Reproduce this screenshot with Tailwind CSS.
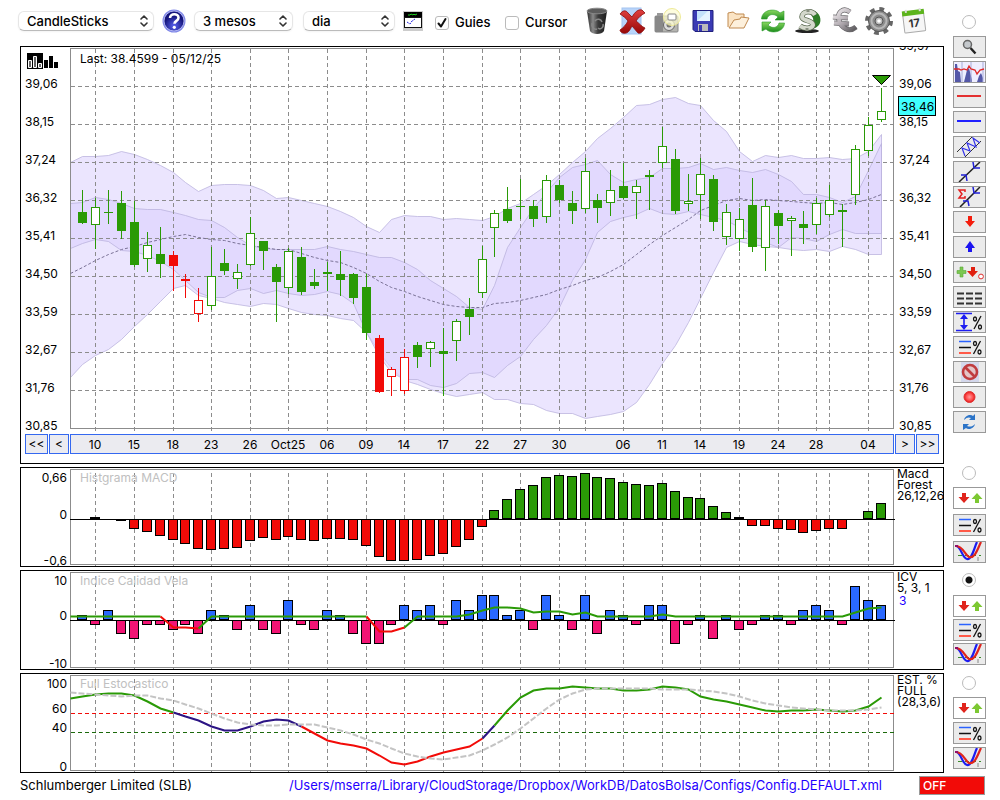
<!DOCTYPE html>
<html lang="ca">
<head>
  <meta charset="UTF-8">
  <title>Schlumberger Limited (SLB)</title>
  <script src="https://cdn.jsdelivr.net/npm/@tailwindcss/browser@4"></script>
</head>
<body class="bg-white text-black font-['Inter',sans-serif] text-[13px]">

  <!-- shared gradients and repeated icons -->
  <svg class="absolute size-0" aria-hidden="true">
    <defs>
      <linearGradient id="metal" x1="0" x2="1"><stop offset="0" stop-color="#2a2a2a"/><stop offset=".3" stop-color="#8a8a8a"/><stop offset=".55" stop-color="#3c3c3c"/><stop offset="1" stop-color="#1c1c1c"/></linearGradient>
      <linearGradient id="silver" x1="0" x2="1" y2="1"><stop offset="0" stop-color="#f4f0f2"/><stop offset=".5" stop-color="#b5aeb4"/><stop offset="1" stop-color="#5a585b"/></linearGradient>
      <linearGradient id="green" x2="0" y2="1"><stop offset="0" stop-color="#8ad860"/><stop offset="1" stop-color="#1c8c1c"/></linearGradient>
      <linearGradient id="redx" x2="0" y2="1"><stop offset="0" stop-color="#e04040"/><stop offset="1" stop-color="#980808"/></linearGradient>
      <radialGradient id="help" cy=".75"><stop offset="0" stop-color="#5a64f0"/><stop offset="1" stop-color="#15157c"/></radialGradient>
      <radialGradient id="rec"><stop offset="0" stop-color="#ff9a9a"/><stop offset=".6" stop-color="#ff5050"/><stop offset="1" stop-color="#e01818"/></radialGradient>
    </defs>
    <symbol id="i-updown" viewBox="0 0 31 20">
      <path d="M8 5h4v4h3.500l-5.500 6-5.500-6H8z" fill="#e0241c"/>
      <path d="M21 15h4v-4h3.500l-5.500-6-5.500 6H21z" fill="#7cc832"/>
    </symbol>
    <symbol id="i-percent" viewBox="0 0 31 20">
      <path d="M5 4.500h12" stroke="#2a62ff" stroke-width="1.500"/>
      <path d="M5 10.500h12" stroke="#111" stroke-width="1.500"/>
      <path d="M5 16h12" stroke="#ff5a48" stroke-width="2"/>
      <path d="M26.500 4l-7 13" stroke="#111" stroke-width="1.300"/>
      <g fill="none" stroke="#111" stroke-width="1.300"><ellipse cx="21" cy="6.500" rx="1.500" ry="2"/><ellipse cx="25.500" cy="15" rx="1.500" ry="2"/></g>
    </symbol>
    <symbol id="i-cross" viewBox="0 0 31 20">
      <path d="M4 13.500h23" stroke="#3a8a2a" stroke-dasharray="4 3"/>
      <path d="M24 15v4" stroke="#888"/>
      <path d="M2 4c5 0 6 12 11 13 5 1 7-11 10-17" fill="none" stroke="#1c1cf0" stroke-width="2.200"/>
      <path d="M2 4c7 0 9 9 13 11 6 2 9-9 12-15" fill="none" stroke="#e0241c" stroke-width="2.200"/>
      <rect x="1" y="3" width="3" height="2" fill="#90106a"/>
    </symbol>
    <symbol id="i-chevrons" viewBox="0 0 8 12">
      <path d="M1 4l3-3 3 3M1 8l3 3 3-3" fill="none" stroke="#333" stroke-width="1.600" stroke-linecap="round" stroke-linejoin="round"/>
    </symbol>
  </svg>

  <main class="flex gap-[9px] pl-5 pr-[14px]">
    <div class="min-w-0 flex-1">

      <header class="-ml-0.5 flex h-[46px] items-center pb-1">
        <div class="relative mr-2">
          <select aria-label="Tipus" class="h-5 w-[136px] appearance-none rounded-md border border-[#e6e6e6] border-b-[#bbb] bg-white pl-2 font-medium leading-4 shadow-xs"><option>CandleSticks</option></select>
          <svg class="pointer-events-none absolute right-1.5 top-1 h-3 w-2"><use href="#i-chevrons"/></svg>
        </div>
        <button aria-label="Ajuda" class="mr-2 h-6 w-6">
          <svg viewBox="0 0 24 24" class="size-6"><circle cx="12" cy="12" r="11.500" fill="#8088e8"/><circle cx="12" cy="12" r="10" fill="url(#help)" stroke="#c4c8f8" stroke-width=".8"/><path d="M8 9c0-5 8.500-5 8.500-.3 0 3.300-4 3-4 6" fill="none" stroke="#fff" stroke-width="2.600"/><circle cx="12.300" cy="18.300" r="1.600" fill="#fff"/></svg>
        </button>
        <div class="relative mr-2.5">
          <select aria-label="Periode" class="h-5 w-[99px] appearance-none rounded-md border border-[#e6e6e6] border-b-[#bbb] bg-white pl-2 font-medium leading-4 shadow-xs"><option>3 mesos</option></select>
          <svg class="pointer-events-none absolute right-1.5 top-1 h-3 w-2"><use href="#i-chevrons"/></svg>
        </div>
        <div class="relative mr-2">
          <select aria-label="Interval" class="h-5 w-[92px] appearance-none rounded-md border border-[#e6e6e6] border-b-[#bbb] bg-white pl-2 font-medium leading-4 shadow-xs"><option>dia</option></select>
          <svg class="pointer-events-none absolute right-1.5 top-1 h-3 w-2"><use href="#i-chevrons"/></svg>
        </div>
        <button aria-label="Panells" class="mr-3">
          <svg viewBox="0 0 20 20" class="size-5"><rect width="20" height="20" fill="#ccc"/><rect x="1" y="1" width="18" height="5"/><path d="M5 4h2l1-1 2 1 1-1 1 1 2-1" stroke="#1fd01f" fill="none"/><rect x="1.500" y="6.500" width="17" height="10" fill="#fff" stroke="#111"/><path d="M4 11l3 2 2-3 3-2" fill="none" stroke="#2020e0" stroke-dasharray="2 1"/></svg>
        </button>
        <div class="flex items-center pt-[3px]">
          <div class="relative size-3.5">
            <input id="guies" type="checkbox" checked class="peer block size-3.5 appearance-none rounded-[3px] border border-[#bbb] bg-white">
            <svg viewBox="0 0 14 14" class="pointer-events-none invisible absolute inset-0 size-3.5 peer-checked:visible"><path d="M3.500 7.500l2.500 3 4.500-7.500" fill="none" stroke="#111" stroke-width="2" stroke-linecap="round" stroke-linejoin="round"/></svg>
          </div>
          <label for="guies" class="ml-1.5 w-[50px] font-medium">Guies</label>
          <input id="cursor" type="checkbox" class="size-3.5 appearance-none rounded-[3px] border border-[#bbb] bg-white">
          <label for="cursor" class="ml-1.5 w-[57px] font-medium">Cursor</label>
        </div>

        <div class="flex flex-1 items-center justify-between pr-[15px] [&>button]:flex [&>button]:w-[30px] [&>button]:justify-center">
          <button aria-label="Esborrar"><svg viewBox="0 0 26 28" class="h-7 w-[26px]"><path d="M3 4l3 20c2 4 12 4 14 0l3-20z" fill="url(#metal)"/><ellipse cx="13" cy="4" rx="10" ry="2.800" fill="#5c5c5c" stroke="#888"/><path d="M11 14c2-3 6-2 7 1M8 16c-1 4 2 7 5 6M19 17c1 4-3 6-5 4" fill="none" stroke="#888" stroke-width="1.500"/></svg></button>
          <button aria-label="Eliminar"><svg viewBox="0 0 28 28" class="size-7"><rect x="4" y="1" width="19" height="26" fill="#b8d4fa" stroke="#a4c4f0"/><path d="M2 7c3-4 6-4 8-1l4 4c3-5 6-8 10-7l3 3c-4 2-7 5-9 8 3 2 6 6 9 7-2 4-5 6-7 5l-6-7c-2 4-4 7-6 7-3 1-6-1-6-3 3-2 6-5 8-9-2-3-5-5-8-7z" fill="url(#redx)" stroke="#8c0c0c" stroke-width=".8"/></svg></button>
          <button aria-label="Captura"><svg viewBox="0 0 28 28" class="size-7"><rect x="2" y="9" width="23" height="16" rx="1" fill="#b4b4b0" stroke="#888"/><rect x="2" y="9" width="8" height="16" fill="#888"/><rect x="4" y="6" width="6" height="3" fill="#999"/><circle cx="16" cy="18" r="5.500" fill="#ddd" stroke="#666"/><circle cx="16" cy="18" r="2.500" fill="#777"/><circle cx="19" cy="10" r="8.500" fill="#fcfbd0" fill-opacity=".7" stroke="#eeea98"/><rect x="15" y="7" width="8" height="6" rx="1" fill="#fff" stroke="#888"/></svg></button>
          <button aria-label="Desar"><svg viewBox="0 0 24 24" class="size-6"><path d="M2 1.500h20v21H4l-2-2z" fill="#3a3ab4" stroke="#20207c"/><rect x="6" y="2" width="13" height="10" fill="#c4e2fa"/><path d="M6 12L17 2h2v10z" fill="#e6f4ff"/><rect x="7" y="15" width="10" height="7" fill="#bbb"/><rect x="8" y="16" width="3" height="6" fill="#3a3ab4"/></svg></button>
          <button aria-label="Obrir"><svg viewBox="0 0 26 26" class="size-[26px]"><path d="M3 19V5l5-1 3 2h8v5" fill="#fbe4c4" stroke="#c08a50"/><path d="M4 20l5-8 6-1 1-2 8 1-5 10z" fill="#fdf0dc" stroke="#c08a50"/></svg></button>
          <button aria-label="Actualitzar"><svg viewBox="0 0 26 26" class="size-[26px]"><path d="M1.500 11C2 1 16 0 20 5l4-2v9h-9l3-3C14 5 8 6 7 11z" fill="url(#green)" stroke="#2a9a2a" stroke-width=".6"/><path d="M24.500 15C24 25 10 26 6 21l-4 2v-9h9l-3 3c4 4 10 3 11-2z" fill="url(#green)" stroke="#2a9a2a" stroke-width=".6"/></svg></button>
          <button aria-label="Dividends"><svg viewBox="0 0 28 28" class="size-7"><ellipse cx="13" cy="24" rx="12" ry="2" fill="#222"/><path d="M14 3c10-1 14 7 12 13-2 5-8 7-14 6 6-2 8-6 7-11z" fill="#2f7c28"/><path d="M21 8c-3-5-13-4-13 2 0 4 11 3 11 8-1 4-9 4-13 1" fill="none" stroke="#5a6a50" stroke-width="5.500"/><path d="M21 8c-3-5-13-4-13 2 0 4 11 3 11 8-1 4-9 4-13 1" fill="none" stroke="#d4d8cc" stroke-width="4"/><path d="M14 2v3M13 21v3" stroke="#889080" stroke-width="3"/></svg></button>
          <button aria-label="Divisa"><svg viewBox="0 0 28 28" class="size-7"><path d="M20 5C13 0 7 5 9 13s10 13 17 7M3 10l15 1M4 16l15 1" fill="none" stroke="#6a686b" stroke-width="5"/><path d="M20 5C13 0 7 5 9 13s10 13 17 7M3 10l15 1M4 16l15 1" fill="none" stroke="url(#silver)" stroke-width="3.600"/></svg></button>
          <button aria-label="Configurar"><svg viewBox="0 0 30 30" class="size-[30px]"><circle cx="15" cy="15" r="12" fill="none" stroke="#666" stroke-width="4" stroke-dasharray="4.700 4.720"/><circle cx="15" cy="15" r="10.500" fill="#8c8c8c" stroke="#555"/><circle cx="15" cy="15" r="7.500" fill="none" stroke="#b8b8b8" stroke-width="2"/><circle cx="15" cy="15" r="4" fill="#bbb" stroke="#555"/><circle cx="15" cy="15" r="1.800" fill="#fff"/></svg></button>
          <button aria-label="Calendari"><svg viewBox="0 0 26 26" class="size-[26px]"><g transform="rotate(-7 13 13)"><rect x="2.500" y="3" width="21" height="21" rx="1" fill="#f6f6f6" stroke="#aaa"/><rect x="2" y="2" width="22" height="5" fill="#5cb41c"/><path d="M6 1v3M20 1v3" stroke="#ddd" stroke-width="2"/><text x="13" y="19" text-anchor="middle" font-size="11" font-weight="700" fill="#333">17</text></g></svg></button>
        </div>
      </header>

      <div class="flex flex-col gap-[3px]">
        <section class="border border-black pb-[9px]">
          <svg id="price" viewBox="21 47 922 387" class="block w-full" font-size="12"></svg>
          <div class="flex gap-px px-1 text-xs leading-none">
            <button class="h-5 w-[23px] border border-[#3468f0] bg-[#ebebf0]">&lt;&lt;</button>
            <button class="h-5 w-5 border border-[#3468f0] bg-[#ebebf0]">&lt;</button>
            <div class="h-5 flex-1 border border-[#3468f0] bg-[#ebebf0]">
              <svg id="dates" viewBox="71 435 822 18" class="block w-full" font-size="12" text-anchor="middle"></svg>
            </div>
            <button class="h-5 w-5 border border-[#3468f0] bg-[#ebebf0]">&gt;</button>
            <button class="h-5 w-[23px] border border-[#3468f0] bg-[#ebebf0]">&gt;&gt;</button>
          </div>
        </section>
        <section class="border border-black"><svg id="macd" viewBox="21 468 922 98" class="block w-full" font-size="12"></svg></section>
        <section class="border border-black"><svg id="icv" viewBox="21 571 922 98" class="block w-full" font-size="12"></svg></section>
        <section class="border border-black"><svg id="stoch" viewBox="21 674 922 98" class="block w-full" font-size="12"></svg></section>
      </div>
    </div>

    <aside class="flex w-[33px] flex-col items-center pt-[15px]">
      <input type="radio" name="panel" aria-label="Panell preu" class="mr-0.5 size-3.5 appearance-none rounded-full border border-[#bbb] bg-white">
      <div class="mt-[7px] flex flex-col gap-[3px]">
        <button aria-label="Zoom" class="h-[22px] w-[33px] border border-[#999] bg-[#ebebeb]"><svg viewBox="0 0 31 20" class="h-5 w-[31px]"><path d="M16.500 11l5 5.500" stroke="#222" stroke-width="2.400"/><circle cx="13.500" cy="7.500" r="4" fill="#c4c8cc" stroke="#666" stroke-width="1.500"/></svg></button>
        <button aria-label="Volum" class="h-[22px] w-[33px] border border-[#999] bg-[#eef]"><svg viewBox="0 0 31 20" class="h-5 w-[31px]"><path d="M1 20V2h2l1 7 2 1 1 10h3l3-12 2-2 3 12v2h5l2-6 2-3 2 5v4z" fill="#5458a8"/><path d="M8 0v20M17 0v20M29 0v20" stroke="#a8acd8"/><path d="M0 7h5l2 1 3-1 3 1 2-4 2 3 4 1 2 4 3-4 4-1" fill="none" stroke="#e02828" stroke-width="1.300"/></svg></button>
        <button aria-label="Línia vermella" class="h-[22px] w-[33px] border border-[#999] bg-[#ebebeb]"><svg viewBox="0 0 31 20" class="h-5 w-[31px]"><path d="M3 9h24" stroke="#e43030" stroke-width="2"/></svg></button>
        <button aria-label="Línia blava" class="h-[22px] w-[33px] border border-[#999] bg-[#ebebeb]"><svg viewBox="0 0 31 20" class="h-5 w-[31px]"><path d="M3 9h24" stroke="#2020ff" stroke-width="2"/></svg></button>
        <button aria-label="Canal" class="h-[22px] w-[33px] border border-[#999] bg-[#ebebeb]"><svg viewBox="0 0 31 20" class="h-5 w-[31px]"><path d="M3 15L18 0M11 20L27 4" stroke="#333"/><path d="M11 19L8 11l8 3-3-8 9 4-3-9 7 5" fill="none" stroke="#3434e8" stroke-width="1.200"/></svg></button>
        <button aria-label="Tendència" class="h-[22px] w-[33px] border border-[#999] bg-[#ebebeb]"><svg viewBox="0 0 31 20" class="h-5 w-[31px]"><path d="M5 20L26 0" stroke="#222" stroke-width="1.500"/><path d="M7 13l5 0 1 6M19 0l1 6h6" fill="none" stroke="#2020d8" stroke-width="1.500"/></svg></button>
        <button aria-label="Suma tendència" class="h-[22px] w-[33px] border border-[#999] bg-[#ebebeb]"><svg viewBox="0 0 31 20" class="h-5 w-[31px]"><path d="M6 20L26 0" stroke="#222" stroke-width="1.500"/><path d="M9 14h5l1 5M19 0l1 6h6" fill="none" stroke="#2020d8" stroke-width="1.500"/><path d="M11 5V3H5l3 4-3 4h6V9" fill="none" stroke="#e42020" stroke-width="1.500"/></svg></button>
        <button aria-label="Venda" class="h-[22px] w-[33px] border border-[#999] bg-[#ebebeb]"><svg viewBox="0 0 31 20" class="h-5 w-[31px]"><path d="M14 4h4v5h3l-5 6-5-6h3z" fill="#f41c0c"/></svg></button>
        <button aria-label="Compra" class="h-[22px] w-[33px] border border-[#999] bg-[#ebebeb]"><svg viewBox="0 0 31 20" class="h-5 w-[31px]"><path d="M14 15h4v-4h3l-5-7-5 7h3z" fill="#1c14f0"/></svg></button>
        <button aria-label="Senyals" class="h-[22px] w-[33px] border border-[#999] bg-[#ebebeb]"><svg viewBox="0 0 31 20" class="h-5 w-[31px]"><path d="M6 5h3v3.500h3v3H9V15H6v-3.500H3v-3h3z" fill="#7cc850" stroke="#58a838" stroke-width=".6"/><path d="M17 5h4v4h3l-5.500 6L13 9h4z" fill="#e02010"/><circle cx="27" cy="14.500" r="2.400" fill="#fff" stroke="#e03030"/></svg></button>
        <button aria-label="Línies" class="h-[22px] w-[33px] border border-[#999] bg-[#ebebeb]"><svg viewBox="0 0 31 20" class="h-5 w-[31px]"><path d="M3 6.500h25M3 11.500h25M3 16.500h25" stroke="#333" stroke-width="1.800" stroke-dasharray="7 2"/></svg></button>
        <button aria-label="Rang" class="h-[22px] w-[33px] border border-[#999] bg-[#ebebeb]"><svg viewBox="0 0 31 20" class="h-5 w-[31px]"><path d="M2 1.500h16M2 18.500h16M10 4v12" stroke="#1c1cf0" stroke-width="1.600"/><path d="M10 2l4 5H6zM10 18l4-5H6z" fill="#1c1cf0"/><path d="M27 4l-7 13" stroke="#111" stroke-width="1.300"/><g fill="none" stroke="#111" stroke-width="1.300"><ellipse cx="21" cy="7" rx="1.500" ry="2"/><ellipse cx="26" cy="15" rx="1.500" ry="2"/></g></svg></button>
        <button aria-label="Percentatge" class="h-[22px] w-[33px] border border-[#999] bg-[#ebebeb]"><svg class="h-5 w-[31px]"><use href="#i-percent"/></svg></button>
        <button aria-label="Prohibit" class="h-[22px] w-[33px] border border-[#999] bg-[#ebebeb]"><svg viewBox="0 0 31 20" class="h-5 w-[31px]"><rect x="7" width="18" height="20" fill="#d4d8ec"/><circle cx="16" cy="10" r="7" fill="#e4c4c8" stroke="#c03c40" stroke-width="2.600"/><path d="M11 5l10 10" stroke="#c03c40" stroke-width="2.600"/></svg></button>
        <button aria-label="Gravar" class="h-[22px] w-[33px] border border-[#999] bg-[#ebebeb]"><svg viewBox="0 0 31 20" class="h-5 w-[31px]"><circle cx="15.500" cy="10" r="5.500" fill="url(#rec)" stroke="#e03434"/></svg></button>
        <button aria-label="Recarregar" class="h-[22px] w-[33px] border border-[#999] bg-[#ebebeb]"><svg viewBox="0 0 31 20" class="h-5 w-[31px]"><path d="M10 8c1-5 7-6 9-4l2-2v6h-6l2-2c-2-1-4-1-7 2zM21 12c-1 5-7 6-9 4l-3 2v-6h6l-2 2c3 1 5 1 8-2z" fill="#2c74c8"/></svg></button>
      </div>

      <input type="radio" name="panel" aria-label="Panell MACD" class="mt-[33px] mr-0.5 size-3.5 appearance-none rounded-full border border-[#bbb] bg-white">
      <div class="mt-[7px] flex flex-col gap-[5px]">
        <button aria-label="Moure MACD" class="h-[22px] w-[33px] border border-[#999] bg-white"><svg class="h-5 w-[31px]"><use href="#i-updown"/></svg></button>
        <button aria-label="Nivells MACD" class="h-[22px] w-[33px] border border-[#999] bg-[#ebebeb]"><svg class="h-5 w-[31px]"><use href="#i-percent"/></svg></button>
        <button aria-label="Indicador MACD" class="h-[22px] w-[33px] border border-[#999] bg-[#ebebeb]"><svg class="h-5 w-[31px]"><use href="#i-cross"/></svg></button>
      </div>

      <input type="radio" name="panel" checked aria-label="Panell ICV" class="mt-[10px] mr-0.5 size-3.5 appearance-none rounded-full border border-[#bbb] bg-white bg-[radial-gradient(circle,#111_3px,transparent_4px)]">
      <div class="mt-2 flex flex-col gap-[2px]">
        <button aria-label="Moure ICV" class="h-[22px] w-[33px] border border-[#999] bg-white"><svg class="h-5 w-[31px]"><use href="#i-updown"/></svg></button>
        <button aria-label="Nivells ICV" class="h-[22px] w-[33px] border border-[#999] bg-[#ebebeb]"><svg class="h-5 w-[31px]"><use href="#i-percent"/></svg></button>
        <button aria-label="Indicador ICV" class="h-[22px] w-[33px] border border-[#999] bg-[#ebebeb]"><svg class="h-5 w-[31px]"><use href="#i-cross"/></svg></button>
      </div>

      <input type="radio" name="panel" aria-label="Panell estocàstic" class="mt-[11px] mr-0.5 size-3.5 appearance-none rounded-full border border-[#bbb] bg-white">
      <div class="mt-[7px] flex flex-col gap-[3px]">
        <button aria-label="Moure estocàstic" class="h-[22px] w-[33px] border border-[#999] bg-white"><svg class="h-5 w-[31px]"><use href="#i-updown"/></svg></button>
        <button aria-label="Nivells estocàstic" class="h-[22px] w-[33px] border border-[#999] bg-[#ebebeb]"><svg class="h-5 w-[31px]"><use href="#i-percent"/></svg></button>
        <button aria-label="Indicador estocàstic" class="h-[22px] w-[33px] border border-[#999] bg-[#ebebeb]"><svg class="h-5 w-[31px]"><use href="#i-cross"/></svg></button>
      </div>
    </aside>
  </main>

  <footer class="flex items-center pt-[3px] pl-5 pr-[15px]">
    <span>Schlumberger Limited (SLB)</span>
    <a href="#" class="ml-auto mr-[37px] text-[#1f00ff]">/Users/mserra/Library/CloudStorage/Dropbox/WorkDB/DatosBolsa/Configs/Config.DEFAULT.xml</a>
    <button class="h-[19px] w-[66px] border border-[#999] bg-[#f20b08] pl-[3px] text-left text-xs leading-none font-medium text-white">OFF</button>
  </footer>

  <script>
    const GREEN = "#2a9a06", RED = "#f20b08", GREY = "#8c8c8c";
    // x of session i, on a whole pixel
    const sx = i => Math.floor(82.95 + i * 12.875);
    const guides = [1, 4, 7, 10, 13, 16, 19, 22, 25, 28, 31, 34, 37, 39, 42, 45, 48, 51, 54, 57, 58, 61];
    const labels = { 1: "10", 4: "15", 7: "18", 10: "23", 13: "26", 16: "Oct25", 19: "06", 22: "09", 25: "14", 28: "17", 31: "22", 34: "27", 37: "30", 42: "06", 45: "11", 48: "14", 51: "19", 54: "24", 57: "28", 61: "04" };

    // [high, body top, body bottom, low, kind]: g/r filled, G/R hollow
    const candles = [
      [190,212,223,224,"g"],[198,207,225,249,"G"],[190,212,213,224,"g"],[191,203,231,239,"g"],[201,222,265,267,"g"],[232,245,259,272,"G"],[227,254,264,278,"g"],
      [251,255,266,291,"r"],[274,279,281,298,"r"],[288,300,314,322,"R"],[247,276,306,310,"G"],[249,263,271,275,"g"],[264,272,279,289,"G"],[217,233,265,266,"G"],
      [241,241,251,270,"g"],[264,267,282,322,"g"],[248,251,288,294,"G"],[247,257,292,295,"g"],[269,282,286,289,"g"],[262,272,274,291,"g"],[251,274,280,296,"g"],
      [273,274,298,304,"g"],[274,287,333,340,"g"],[335,338,392,393,"r"],[367,369,377,396,"R"],[349,357,391,394,"R"],[342,345,357,368,"g"],[341,342,349,367,"G"],
      [328,351,354,396,"g"],[319,321,341,361,"G"],[298,309,317,335,"g"],[246,259,293,298,"G"],[210,213,228,257,"G"],[187,209,221,223,"g"],[179,206,207,219,"g"],
      [200,206,219,227,"g"],[175,180,217,223,"G"],[180,185,200,203,"g"],[191,203,211,224,"g"],[158,171,209,213,"G"],[194,200,208,223,"g"],[170,190,203,216,"G"],
      [163,186,198,199,"g"],[180,186,193,219,"G"],[170,175,177,210,"g"],[127,146,163,168,"G"],[149,159,211,214,"g"],[174,201,204,211,"G"],[158,174,195,219,"G"],
      [175,179,222,231,"g"],[204,212,237,245,"G"],[208,219,239,251,"G"],[178,205,247,252,"g"],[200,206,248,271,"G"],[210,213,226,244,"g"],[216,218,221,256,"G"],
      [211,224,228,244,"g"],[198,203,225,234,"G"],[185,200,215,217,"G"],[204,210,212,247,"g"],[145,149,195,205,"G"],[117,125,151,156,"G"],[88,111,120,122,"G"]
    ];

    // lines hold one value at the left edge of the plot, then one per session
    const slowUp = [162,156,156,155,151,154,159,165,172,182,191,185,184,184,185,190,198,197,200,203,206,211,217,226,232,219,215,216,216,219,218,219,220,216,208,203,194,185,174,162,151,138,128,117,105,104,99,97,103,105,120,131,151,161,155,157,155,158,158,157,159,158,151,134];
    const slowLow = [377,364,355,349,339,326,314,301,288,285,295,298,302,304,306,303,304,308,312,314,315,318,320,332,352,368,380,384,389,393,396,394,392,399,399,403,404,410,413,413,418,416,414,411,402,384,363,345,322,298,272,247,241,244,246,247,249,250,249,251,246,249,254,254];
    const fastUp = [203,202,197,199,203,208,209,209,212,215,219,220,227,237,245,248,249,249,249,249,246,249,251,254,257,257,262,269,280,288,296,307,309,285,247,227,208,192,177,167,164,160,174,182,179,177,168,168,167,163,169,167,170,172,169,174,181,194,194,197,202,196,170,143];
    const fastLow = [248,243,239,241,250,251,255,261,269,280,292,297,297,290,288,293,290,293,295,294,291,294,303,332,356,372,379,379,385,387,383,373,372,377,365,356,339,325,307,280,259,232,221,217,214,208,213,214,211,214,217,220,227,234,242,247,237,238,241,234,229,233,233,233];
    const average = [273,267,260,254,249,246,242,239,236,234,237,239,240,243,245,247,249,249,253,257,260,262,267,273,281,287,291,296,300,304,306,307,307,303,302,300,297,294,289,285,280,277,271,264,254,244,235,227,219,210,205,200,198,200,199,200,201,202,203,202,204,202,199,194];
    const macd = [0,2,1,-1,-9,-12,-16,-20,-24,-29,-30,-29,-28,-21,-18,-20,-17,-20,-21,-19,-19,-20,-26,-37,-41,-41,-40,-36,-34,-27,-20,-7,9,20,30,34,42,44,43,46,42,41,37,35,34,36,28,22,21,13,7,2,-6,-6,-9,-10,-13,-11,-9,-9,0,8,16];
    const icv = [1,-1,2,-3,-4,-1,-1,-2,-1,-3,2,1,-2,3,-2,-3,4,-1,-2,2,1,-3,-5,-5,-1,3,2,3,-1,4,2,5,5,1,2,-2,5,1,-2,5,-3,2,1,-1,3,3,-5,-1,1,-4,1,-2,-1,1,1,-1,2,3,2,-1,7,4,3];
    const icvLine = [616,616,616,616,616,616,616,616,627,627,628,616,616,616,616,616,616,616,616,616,616,616,616,616,631,631,627,616,616,616,616,614,610,607,607,608,612,611,611,614,612,616,616,616,616,616,614,616,616,616,616,616,616,616,616,616,616,616,616,616,616,612,608,607];
    const k = [698,696,694,693,693,695,701,708,712,716,720,726,730,730,726,721,719,720,726,733,740,743,745,748,755,762,764,761,756,752,749,746,738,725,710,697,690,688,688,686,687,688,688,690,690,689,686,687,689,696,699,701,704,707,710,711,710,710,709,710,711,710,706,697];
    const d = [692,693,694,695,696,695,695,698,700,704,708,713,718,722,724,725,725,724,724,724,727,730,734,739,743,748,753,756,758,759,757,755,750,744,737,728,718,708,699,693,689,688,688,688,688,688,689,689,689,690,691,693,696,700,703,705,707,708,709,710,710,710,709,707];

    const pts = (ys, from = 0, to = ys.length - 1) =>
      ys.slice(from, to + 1).map((y, n) => `${from + n ? sx(from + n - 1) + 0.5 : 70.5},${y + 0.5}`);
    const line = (ys, color, from, to, extra = "") =>
      `<polyline points="${pts(ys, from, to).join(" ")}" fill="none" stroke="${color}" stroke-width="2" ${extra}/>`;
    const band = (up, low) =>
      `<polygon points="${pts(up).concat(pts(low).reverse()).join(" ")}" fill="#dbd0fd" fill-opacity=".55" stroke="#b8b0dc" stroke-opacity=".75" stroke-width="1"/>`;
    const frame = (top, bottom) =>
      `<rect x="70.5" y="${top + 0.5}" width="823" height="${bottom - top}" fill="none" stroke="${GREY}"/>`;
    const verticals = (top, bottom) => guides.map(i =>
      `<path d="M${sx(i) + 0.5} ${top}V${bottom}" stroke="${GREY}" stroke-dasharray="4 3"/>`).join("");
    const text = (x, y, s, extra = "") => `<text x="${x}" y="${y}" ${extra}>${s}</text>`;
    const bar = (i, zero, h, color) => h > 0
      ? `<rect x="${sx(i) - 4.5}" y="${zero - h + 0.5}" width="9" height="${h - 1}" fill="${color}" stroke="#000"/>`
      : `<rect x="${sx(i) - 4.5}" y="${zero + 0.5}" width="9" height="${-h}" fill="${color}" stroke="#000"/>`;

    function drawPrice() {
      let s = band(slowUp, slowLow) + band(fastUp, fastLow) + frame(48, 428) + verticals(49, 431);
      for (let y = 86; y <= 390; y += 38)
        s += `<path d="M71 ${y + 0.5}H893" stroke="${GREY}" stroke-dasharray="4 3"/>`;
      s += `<polyline points="${pts(average).join(" ")}" fill="none" stroke="#7a7296" stroke-dasharray="3 2"/>`;
      candles.forEach(([hi, top, bot, lo, kind], i) => {
        const x = sx(i), c = kind.toLowerCase() === "g" ? GREEN : RED;
        s += `<path d="M${x + 0.5} ${hi}V${lo}" stroke="${c}"/>`;
        s += kind === "g" || kind === "r"
          ? `<rect x="${x - 4}" y="${top}" width="9" height="${bot - top}" fill="${c}"/>`
          : `<rect x="${x - 3.5}" y="${top + 0.5}" width="8" height="${bot - top - 1}" fill="#fff" stroke="${c}"/>`;
      });
      s += `<path d="M872.500 75.500h18l-9 9z" fill="${GREEN}" stroke="#000"/>`;
      s += text(80, 63, "Last: 38.4599 - 05/12/25");
      ["39,97", "39,06", "38,15", "37,24", "36,32", "35,41", "34,50", "33,59", "32,67", "31,76", "30,85"].forEach((v, n) => {
        if (n) s += text(25, 50 + n * 38, v);
        s += text(899, 50 + n * 38, v);
      });
      s += `<rect x="898.500" y="96.500" width="37" height="19" fill="#40ffff" stroke="#000"/>` + text(901, 111, "38,46");
      // chart type icon
      s += `<path d="M27 53h16v16H27z"/><path d="M28.500 60.500h3v7h-3zM33.500 56.500h3v11h-3zM38.500 63.500h3v4h-3z" fill="#666" stroke="#fff"/><path d="M44 60h4v8h-4zM49 56h4v12h-4zM54 62h4v6h-4z"/>`;
      document.getElementById("price").innerHTML = s;
    }

    function drawMacd() {
      let s = frame(469, 564) + verticals(473, 566);
      s += text(80, 482, "Histgrama MACD", 'fill="#c0c0c0"');
      macd.forEach((h, i) => { if (h) s += bar(i, 519, h, h > 0 ? GREEN : RED); });
      s += `<path d="M70 519.500H895" stroke="#000"/>`;
      s += text(67, 482, "0,66", 'text-anchor="end"') + text(67, 519, "0", 'text-anchor="end"') + text(67, 565, "-0,6", 'text-anchor="end"');
      s += text(897, 478, "Macd") + text(897, 489, "Forest") + text(897, 500, "26,12,26");
      document.getElementById("macd").innerHTML = s;
    }

    function drawIcv() {
      let s = frame(572, 667) + verticals(576, 669);
      s += text(80, 585, "Indice Calidad Vela", 'fill="#c0c0c0"');
      icv.forEach((v, i) => { s += bar(i, 620, v > 0 ? Math.round(v * 4.9) : Math.round(v * 4.8) + 1, v > 0 ? "#2a68ff" : "#f21474"); });
      s += `<path d="M70 620.500H895" stroke="#000"/>`;
      s += line(icvLine, GREEN, 0, 7) + line(icvLine, RED, 7, 10) + line(icvLine, GREEN, 10, 23) + line(icvLine, RED, 23, 26) + line(icvLine, GREEN, 26, 63);
      s += text(67, 585, "10", 'text-anchor="end"') + text(67, 620, "0", 'text-anchor="end"') + text(67, 668, "-10", 'text-anchor="end"');
      s += text(897, 581, "ICV") + text(897, 592, "5, 3, 1") + text(899, 605, "3", 'fill="#1f00ff"');
      document.getElementById("icv").innerHTML = s;
    }

    function drawStoch() {
      let s = frame(675, 770) + verticals(679, 772);
      s += text(80, 688, "Full Estocastico", 'fill="#c0c0c0"');
      s += `<path d="M71 713.500H895" stroke="${RED}" stroke-dasharray="4 3"/><path d="M71 732.500H895" stroke="#1c6a0c" stroke-dasharray="4 3"/>`;
      s += line(k, GREEN, 0, 8) + line(k, "#2c1484", 8, 18) + line(k, RED, 18, 32) + line(k, "#2c1484", 32, 33) + line(k, GREEN, 33, 63);
      s += line(d, "#c4c4c4", 0, 63, 'stroke-dasharray="6 2"');
      s += text(67, 688, "100", 'text-anchor="end"') + text(67, 713, "60", 'text-anchor="end"') + text(67, 732, "40", 'text-anchor="end"') + text(67, 771, "0", 'text-anchor="end"');
      s += text(897, 684, "EST. %") + text(897, 695, "FULL") + text(897, 706, "(28,3,6)");
      document.getElementById("stoch").innerHTML = s;
    }

    document.getElementById("dates").innerHTML =
      Object.entries(labels).map(([i, v]) => text(sx(+i), 449, v)).join("");

    drawPrice();
    drawMacd();
    drawIcv();
    drawStoch();
  </script>
</body>
</html>
